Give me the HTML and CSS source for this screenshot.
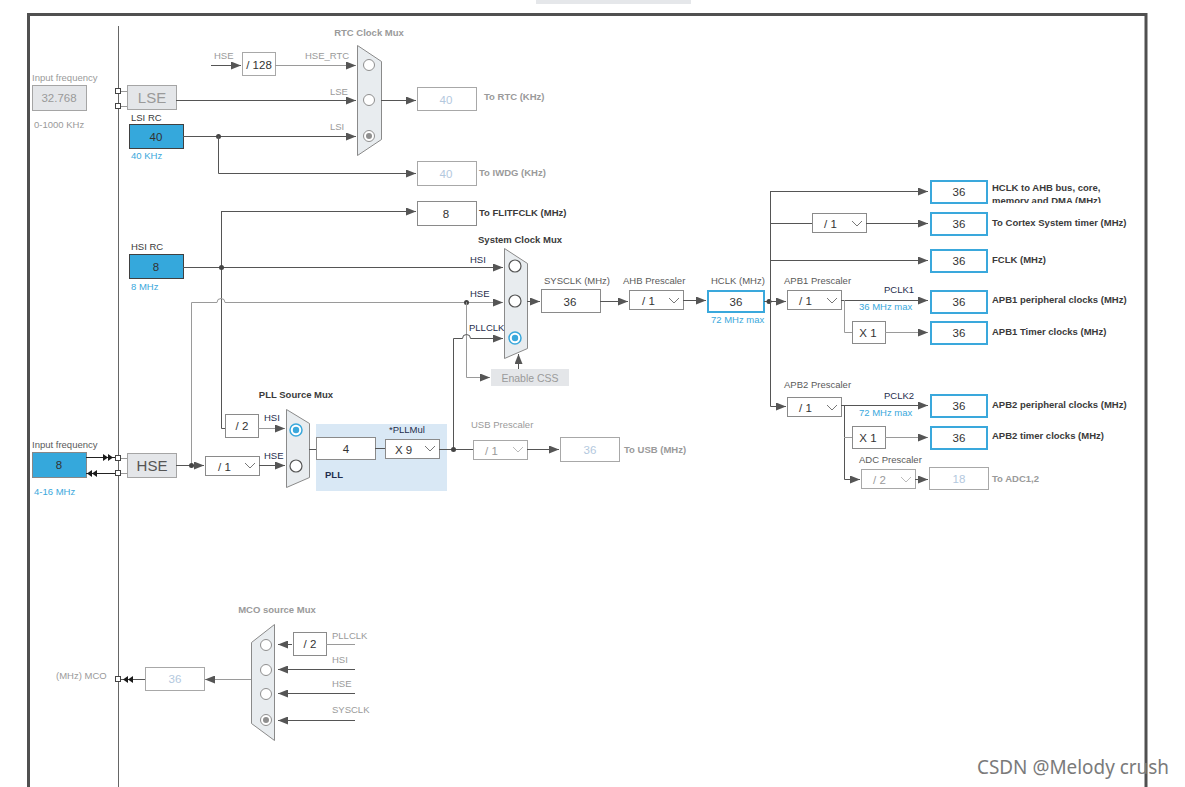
FILE: index.html
```html
<!DOCTYPE html>
<html lang="en">
<head>
<meta charset="utf-8">
<title>Clock Configuration</title>
<link rel="stylesheet" href="styles.css">
</head>
<body>
<main class="canvas">
<svg class="diagram" width="1185" height="787" viewBox="0 0 1185 787" xmlns="http://www.w3.org/2000/svg">
  <defs>
    <marker id="ar" viewBox="0 0 10 8" refX="10" refY="4" markerWidth="10" markerHeight="8" markerUnits="userSpaceOnUse" orient="auto">
      <path class="ah" d="M0,0 L10,4 L0,8 Z"/>
    </marker>
    <clipPath id="clipHclk"><rect x="990" y="178" width="150" height="25"/></clipPath>
  </defs>

  <!-- frame -->
  <rect class="topbar" x="536" y="0" width="155" height="4"/>
  <path class="frame" d="M28.5,800 V14.5 H1146 V800"/>
  <path class="pin" d="M118.5,26 V787"/>

  <!-- ===== LSE ===== -->
  <text class="t-gr" x="32" y="81">Input frequency</text>
  <rect class="bxd" x="32.5" y="85.5" width="54" height="25"/>
  <text class="t-v t-gr t-m" x="59" y="102">32.768</text>
  <text class="t-gr" x="34" y="128">0-1000 KHz</text>
  <rect class="sq" x="115.5" y="88.5" width="5" height="5"/>
  <rect class="sq" x="115.5" y="103.5" width="5" height="5"/>
  <path class="wl" d="M121,91.5 H127 M121,106.5 H127"/>
  <rect class="bxd" x="127.5" y="85.5" width="49" height="24"/>
  <text class="t-big t-gr t-m" x="152" y="103">LSE</text>
  <path class="w" d="M176,100.5 H356" marker-end="url(#ar)"/>
  <text class="t-gr" x="330" y="95">LSE</text>

  <text class="t-dk" x="131" y="121">LSI RC</text>
  <rect class="bxb" x="129.5" y="124.5" width="54" height="24"/>
  <text class="t-v t-m" x="156" y="141">40</text>
  <text class="t-bl" x="131" y="159">40 KHz</text>
  <path class="w" d="M183,136.5 H356" marker-end="url(#ar)"/>
  <circle class="dot" cx="218.5" cy="136.5" r="2.5"/>
  <text class="t-gr" x="330" y="130">LSI</text>
  <path class="w" d="M218.5,136 V173.5 H416" marker-end="url(#ar)"/>
  <rect class="bxg" x="417.5" y="161.5" width="59" height="24"/>
  <text class="t-v t-lv t-m" x="446" y="178">40</text>
  <text class="t-b t-gr" x="479" y="176">To IWDG (KHz)</text>

  <!-- HSE_RTC -->
  <text class="t-gr" x="214" y="59">HSE</text>
  <path class="w" d="M211,65.5 H241" marker-end="url(#ar)"/>
  <rect class="bxg" x="242.5" y="52.5" width="33" height="23"/>
  <text class="t-v t-m" x="259" y="69">/ 128</text>
  <path class="wl" d="M275,65.5 H356" marker-end="url(#ar)"/>
  <text class="t-gr" x="305" y="59">HSE_RTC</text>

  <!-- RTC mux -->
  <text class="t-mux t-gr t-m" x="369" y="36">RTC Clock Mux</text>
  <polygon class="mux" points="357.5,45.5 381.5,61.5 381.5,139.5 357.5,155.5"/>
  <circle class="radg" cx="369" cy="65" r="5.5"/>
  <circle class="radg" cx="369" cy="100" r="5.5"/>
  <circle class="radg" cx="369" cy="136" r="5.5"/>
  <circle class="dotg" cx="369" cy="136" r="3"/>
  <path class="w" d="M381,100.5 H416" marker-end="url(#ar)"/>
  <rect class="bxg" x="417.5" y="87.5" width="59" height="23"/>
  <text class="t-v t-lv t-m" x="446" y="104">40</text>
  <text class="t-b t-gr" x="484" y="100">To RTC (KHz)</text>

  <!-- ===== HSI ===== -->
  <text class="t-dk" x="131" y="250">HSI RC</text>
  <rect class="bxb" x="129.5" y="254.5" width="54" height="24"/>
  <text class="t-v t-m" x="156" y="271">8</text>
  <text class="t-bl" x="131" y="290">8 MHz</text>
  <path class="w" d="M183,267.5 H503" marker-end="url(#ar)"/>
  <path class="w" d="M221.5,211 V428.5 H225"/>
  <circle class="dot" cx="221.5" cy="267.5" r="2.5"/>
  <path class="w" d="M221,211.5 H416" marker-end="url(#ar)"/>
  <rect class="bx" x="417.5" y="201.5" width="59" height="24"/>
  <text class="t-v t-m" x="446" y="218">8</text>
  <text class="t-b t-dk" x="479" y="216">To FLITFCLK (MHz)</text>

  <!-- HSE to system mux with hop -->
  <path class="wl" d="M191.5,465 V302.5 H217 A4,4 0 0 1 225,302.5 H503" marker-end="url(#ar)"/>
  <circle class="dot" cx="466.5" cy="302.5" r="2.5"/>
  <path class="wl" d="M466.5,302 V377.5 H490" marker-end="url(#ar)"/>
  <rect class="bxd0" x="491" y="369" width="78" height="17"/>
  <text class="t-css t-m" x="530" y="382">Enable CSS</text>

  <!-- PLLCLK with hop -->
  <path class="w" d="M453.5,449 V338.5 H462.5 A4,4 0 0 1 470.5,338.5 H503" marker-end="url(#ar)"/>
  <text class="t-nv" x="469" y="331">PLLCLK</text>
  <text class="t-nv" x="470" y="263">HSI</text>
  <text class="t-nv" x="470" y="297">HSE</text>

  <!-- System clock mux -->
  <text class="t-mux t-dk t-m" x="520" y="243">System Clock Mux</text>
  <polygon class="mux" points="504.5,248.5 527.5,263.5 527.5,348.5 504.5,358.5"/>
  <circle class="rad" cx="515" cy="266" r="6"/>
  <circle class="rad" cx="515" cy="301" r="6"/>
  <circle class="radb" cx="515" cy="338" r="6"/>
  <circle class="dotb" cx="515" cy="338" r="3.2"/>
  <path class="w" d="M518.5,369 V354" marker-end="url(#ar)"/>

  <path class="w" d="M527,301.5 H540" marker-end="url(#ar)"/>
  <text class="t-md" x="544" y="284">SYSCLK (MHz)</text>
  <rect class="bx" x="541.5" y="289.5" width="59" height="23"/>
  <text class="t-v t-m" x="570" y="306">36</text>
  <path class="w" d="M600,301.5 H628" marker-end="url(#ar)"/>

  <text class="t-md" x="623" y="284">AHB Prescaler</text>
  <rect class="bx" x="629.5" y="290.5" width="54" height="19"/>
  <text class="t-v" x="642" y="305">/ 1</text>
  <polyline class="chev" points="669,298 674,303 679,298"/>
  <path class="w" d="M683,300.5 H706" marker-end="url(#ar)"/>

  <text class="t-md" x="711" y="284">HCLK (MHz)</text>
  <rect class="bxh" x="708" y="291" width="56" height="21"/>
  <text class="t-v t-m" x="736" y="306">36</text>
  <text class="t-bl" x="711" y="323">72 MHz max</text>
  <path class="w" d="M764,301.5 H786" marker-end="url(#ar)"/>
  <circle class="dot" cx="769" cy="301.5" r="2.5"/>

  <!-- HCLK distribution -->
  <path class="w" d="M770.5,191 V406.5 H786" marker-end="url(#ar)"/>
  <path class="w" d="M770,191.5 H928" marker-end="url(#ar)"/>
  <rect class="bxh" x="931" y="181" width="56" height="22"/>
  <text class="t-v t-m" x="959" y="196">36</text>
  <g clip-path="url(#clipHclk)">
    <text class="t-b t-dk" x="992" y="191">HCLK to AHB bus, core,</text>
    <text class="t-b t-dk" x="992" y="204">memory and DMA (MHz)</text>
  </g>

  <path class="w" d="M770,223.5 H812"/>
  <rect class="bx" x="812.5" y="213.5" width="54" height="19"/>
  <text class="t-v" x="824" y="228">/ 1</text>
  <polyline class="chev" points="852,221 857,226 862,221"/>
  <path class="w" d="M866,223.5 H928" marker-end="url(#ar)"/>
  <rect class="bxh" x="931" y="213" width="56" height="22"/>
  <text class="t-v t-m" x="959" y="228">36</text>
  <text class="t-b t-dk" x="992" y="226">To Cortex System timer (MHz)</text>

  <path class="w" d="M770,260.5 H928" marker-end="url(#ar)"/>
  <rect class="bxh" x="931" y="250" width="56" height="22"/>
  <text class="t-v t-m" x="959" y="265">36</text>
  <text class="t-b t-dk" x="992" y="263">FCLK (MHz)</text>

  <!-- APB1 -->
  <text class="t-md" x="784" y="284">APB1 Prescaler</text>
  <rect class="bx" x="787.5" y="290.5" width="54" height="19"/>
  <text class="t-v" x="799" y="305">/ 1</text>
  <polyline class="chev" points="827,298 832,303 837,298"/>
  <path class="w" d="M841,300.5 H928" marker-end="url(#ar)"/>
  <text class="t-nv" x="884" y="293">PCLK1</text>
  <text class="t-bl" x="859" y="310">36 MHz max</text>
  <rect class="bxh" x="931" y="291" width="56" height="22"/>
  <text class="t-v t-m" x="959" y="306">36</text>
  <text class="t-b t-dk" x="992" y="303">APB1 peripheral clocks (MHz)</text>
  <path class="wl" d="M844.5,300 V332.5 H852"/>
  <rect class="bx" x="852.5" y="321.5" width="33" height="22"/>
  <text class="t-v t-m" x="868" y="337">X 1</text>
  <path class="wl" d="M885,332.5 H928" marker-end="url(#ar)"/>
  <rect class="bxh" x="931" y="322" width="56" height="22"/>
  <text class="t-v t-m" x="959" y="337">36</text>
  <text class="t-b t-dk" x="992" y="335">APB1 Timer clocks (MHz)</text>

  <!-- APB2 -->
  <text class="t-md" x="784" y="388">APB2 Prescaler</text>
  <rect class="bx" x="787.5" y="397.5" width="54" height="19"/>
  <text class="t-v" x="799" y="412">/ 1</text>
  <polyline class="chev" points="827,405 832,410 837,405"/>
  <path class="w" d="M841,405.5 H928" marker-end="url(#ar)"/>
  <text class="t-nv" x="884" y="399">PCLK2</text>
  <text class="t-bl" x="859" y="416">72 MHz max</text>
  <rect class="bxh" x="931" y="395" width="56" height="22"/>
  <text class="t-v t-m" x="959" y="410">36</text>
  <text class="t-b t-dk" x="992" y="408">APB2 peripheral clocks (MHz)</text>
  <path class="w" d="M844.5,405 V479.5 H860" marker-end="url(#ar)"/>
  <path class="wl" d="M844,437.5 H852"/>
  <rect class="bx" x="852.5" y="426.5" width="33" height="22"/>
  <text class="t-v t-m" x="868" y="442">X 1</text>
  <path class="wl" d="M885,437.5 H928" marker-end="url(#ar)"/>
  <rect class="bxh" x="931" y="427" width="56" height="22"/>
  <text class="t-v t-m" x="959" y="442">36</text>
  <text class="t-b t-dk" x="992" y="439">APB2 timer clocks (MHz)</text>

  <text class="t-md" x="859" y="463">ADC Prescaler</text>
  <rect class="bxg" x="861.5" y="469.5" width="54" height="19"/>
  <text class="t-v t-gr" x="873" y="484">/ 2</text>
  <polyline class="chevl" points="901,477 906,482 911,477"/>
  <path class="w" d="M915,479.5 H928" marker-end="url(#ar)"/>
  <rect class="bxg" x="929.5" y="467.5" width="59" height="22"/>
  <text class="t-v t-lv t-m" x="959" y="483">18</text>
  <text class="t-b t-gr" x="992" y="482">To ADC1,2</text>

  <!-- ===== HSE input ===== -->
  <text class="t-md" x="32" y="448">Input frequency</text>
  <rect class="bxb2" x="32.5" y="452.5" width="54" height="25"/>
  <text class="t-v t-m" x="59" y="469">8</text>
  <text class="t-bl" x="34" y="495">4-16 MHz</text>
  <path class="wk" d="M86,457.5 H115 M86,473.5 H115"/>
  <polygon class="ahk" points="103,454 108,457.5 103,461"/>
  <polygon class="ahk" points="108,454 113,457.5 108,461"/>
  <polygon class="ahk" points="92,470 87,473.5 92,477"/>
  <polygon class="ahk" points="97,470 92,473.5 97,477"/>
  <rect class="sq" x="115.5" y="455.5" width="5" height="5"/>
  <rect class="sq" x="115.5" y="470.5" width="5" height="5"/>
  <path class="wl" d="M121,458.5 H127 M121,473.5 H127"/>
  <rect class="bxd" x="127.5" y="453.5" width="49" height="24"/>
  <text class="t-big t-m" x="152" y="471">HSE</text>
  <path class="w" d="M176,465.5 H204" marker-end="url(#ar)"/>
  <circle class="dot" cx="191.5" cy="465.5" r="2.5"/>
  <rect class="bx" x="205.5" y="456.5" width="54" height="19"/>
  <text class="t-v" x="218" y="471">/ 1</text>
  <polyline class="chev" points="245,463 250,468 255,463"/>
  <path class="w" d="M259,465.5 H285" marker-end="url(#ar)"/>
  <text class="t-nv" x="264" y="459">HSE</text>

  <rect class="bx" x="225.5" y="414.5" width="33" height="23"/>
  <text class="t-v t-m" x="242" y="430">/ 2</text>
  <path class="wl" d="M258,428.5 H285" marker-end="url(#ar)"/>
  <text class="t-nv" x="264" y="421">HSI</text>

  <!-- PLL source mux -->
  <text class="t-mux t-dk t-m" x="296" y="398">PLL Source Mux</text>
  <polygon class="mux" points="286.5,409.5 309.5,423.5 309.5,477.5 286.5,487.5"/>
  <circle class="radb" cx="296" cy="430" r="6"/>
  <circle class="dotb" cx="296" cy="430" r="3.2"/>
  <circle class="rad" cx="296" cy="466" r="6"/>

  <!-- PLL -->
  <rect class="pll" x="316" y="424" width="131" height="67"/>
  <path class="w" d="M309,449.5 H316"/>
  <rect class="bx" x="316.5" y="437.5" width="59" height="22"/>
  <text class="t-v t-m" x="346" y="453">4</text>
  <path class="w" d="M375,448.5 H385"/>
  <text class="t-sm t-nv" x="389" y="433">*PLLMul</text>
  <rect class="bx" x="385.5" y="439.5" width="54" height="19"/>
  <text class="t-v" x="395" y="454">X 9</text>
  <polyline class="chev" points="425,446 430,451 435,446"/>
  <text class="t-b t-nv" x="325" y="478">PLL</text>
  <path class="w" d="M439,449.5 H473"/>
  <circle class="dot" cx="453.5" cy="449.5" r="2.5"/>

  <!-- USB -->
  <text class="t-gr" x="471" y="428">USB Prescaler</text>
  <rect class="bxg" x="473.5" y="440.5" width="54" height="19"/>
  <text class="t-v t-gr" x="485" y="455">/ 1</text>
  <polyline class="chevl" points="513,447 518,452 523,447"/>
  <path class="w" d="M527,449.5 H559" marker-end="url(#ar)"/>
  <rect class="bxg" x="560.5" y="437.5" width="59" height="24"/>
  <text class="t-v t-lv t-m" x="590" y="454">36</text>
  <text class="t-b t-gr" x="624" y="453">To USB (MHz)</text>

  <!-- ===== MCO ===== -->
  <text class="t-mux t-gr t-m" x="277" y="613">MCO source Mux</text>
  <polygon class="mux" points="251.5,642.5 274.5,624.5 274.5,740.5 251.5,723.5"/>
  <circle class="radg" cx="266" cy="645" r="5.5"/>
  <circle class="radg" cx="266" cy="670" r="5.5"/>
  <circle class="radg" cx="266" cy="694" r="5.5"/>
  <circle class="radg" cx="266" cy="720" r="5.5"/>
  <circle class="dotg" cx="266" cy="720" r="3"/>
  <rect class="bx" x="293.5" y="632.5" width="33" height="23"/>
  <text class="t-v t-m" x="310" y="648">/ 2</text>
  <path class="w" d="M292,644.5 H278" marker-end="url(#ar)"/>
  <path class="wl" d="M326,644.5 H355"/>
  <path class="w" d="M355,669.5 H278" marker-end="url(#ar)"/>
  <path class="w" d="M355,693.5 H278" marker-end="url(#ar)"/>
  <path class="w" d="M355,720.5 H278" marker-end="url(#ar)"/>
  <text class="t-gr" x="332" y="639">PLLCLK</text>
  <text class="t-gr" x="332" y="663">HSI</text>
  <text class="t-gr" x="332" y="687">HSE</text>
  <text class="t-gr" x="332" y="713">SYSCLK</text>
  <path class="wl" d="M251,679.5 H205" marker-end="url(#ar)"/>
  <rect class="bxg" x="145.5" y="667.5" width="59" height="23"/>
  <text class="t-v t-lv t-m" x="175" y="683">36</text>
  <path class="w" d="M145,679.5 H121"/>
  <polygon class="ahk" points="128,676 123,679.5 128,683"/>
  <polygon class="ahk" points="133,676 128,679.5 133,683"/>
  <rect class="sq" x="115.5" y="676.5" width="5" height="5"/>
  <text class="t-gr" x="56" y="679">(MHz) MCO</text>

  <!-- watermark -->
  <text class="wm" x="977" y="774" textLength="192" lengthAdjust="spacingAndGlyphs">CSDN @Melody crush</text>
</svg>
</main>
</body>
</html>
```
FILE: styles.css
```css
html, body {
  margin: 0;
  padding: 0;
  background: #ffffff;
}

.canvas {
  width: 1185px;
  height: 787px;
  overflow: hidden;
  background: #ffffff;
}

.diagram {
  display: block;
}

.diagram text {
  font-family: "Liberation Sans", Arial, sans-serif;
  font-size: 9.5px;
  fill: #555555;
}

.topbar { fill: #e5e7ea; }
.frame { fill: none; stroke: #505050; stroke-width: 3; }
.pin { fill: none; stroke: #666666; stroke-width: 1; }

.w { fill: none; stroke: #555555; stroke-width: 1; }
.wl { fill: none; stroke: #9a9a9a; stroke-width: 1; }
.wk { fill: none; stroke: #222222; stroke-width: 1; }
.ah { fill: #555555; }
.ahk { fill: #1a1a1a; }
.dot { fill: #444444; }

.sq { fill: #ffffff; stroke: #444444; stroke-width: 1; }

.bx { fill: #ffffff; stroke: #8a8a8a; stroke-width: 1; }
.bxg { fill: #ffffff; stroke: #a8a8a8; stroke-width: 1; }
.bxd { fill: #e4e6e9; stroke: #a5a5a5; stroke-width: 1; }
.bxd0 { fill: #e4e6e9; }
.bxb { fill: #35a8dc; stroke: #404040; stroke-width: 1; }
.bxb2 { fill: #35a8dc; stroke: #888888; stroke-width: 1; }
.bxh { fill: #ffffff; stroke: #3aa8dc; stroke-width: 2; }

.mux { fill: #e8ecef; stroke: #8a8a8a; stroke-width: 1; }
.rad { fill: #ffffff; stroke: #555555; stroke-width: 1.2; }
.radg { fill: #ffffff; stroke: #8f8f8f; stroke-width: 1; }
.radb { fill: #ffffff; stroke: #3aa8dc; stroke-width: 1.5; }
.dotb { fill: #3aa8dc; }
.dotg { fill: #8f8f8f; }

.pll { fill: #d9e8f5; }

.chev { fill: none; stroke: #777777; stroke-width: 1; }
.chevl { fill: none; stroke: #bbbbbb; stroke-width: 1; }

.diagram .t-dk { fill: #3a3a3a; }
.diagram .t-md { fill: #5a5a5a; }
.diagram .t-gr { fill: #9a9a9a; }
.diagram .t-bl { fill: #3aa8dc; }
.diagram .t-nv { fill: #1f2d4d; }
.diagram .t-lv { fill: #b3c8de; }
.diagram .t-v { font-size: 11.5px; fill: #333333; }
.diagram .t-v.t-gr { fill: #9a9a9a; }
.diagram .t-v.t-lv { fill: #b3c8de; }
.diagram .t-big { font-size: 15px; }
.diagram .t-big.t-gr { fill: #9a9a9a; }
.diagram .t-b { font-weight: bold; }
.diagram .t-m { text-anchor: middle; }
.diagram .t-mux { font-size: 9.5px; font-weight: bold; }
.diagram .t-sm { font-size: 9.5px; }
.diagram .t-css { font-size: 10.5px; fill: #9a9a9a; }

.diagram .wm {
  font-family: "Noto Sans", "DejaVu Sans", sans-serif;
  font-size: 20px;
  fill: #7a7a7a;
}
```
